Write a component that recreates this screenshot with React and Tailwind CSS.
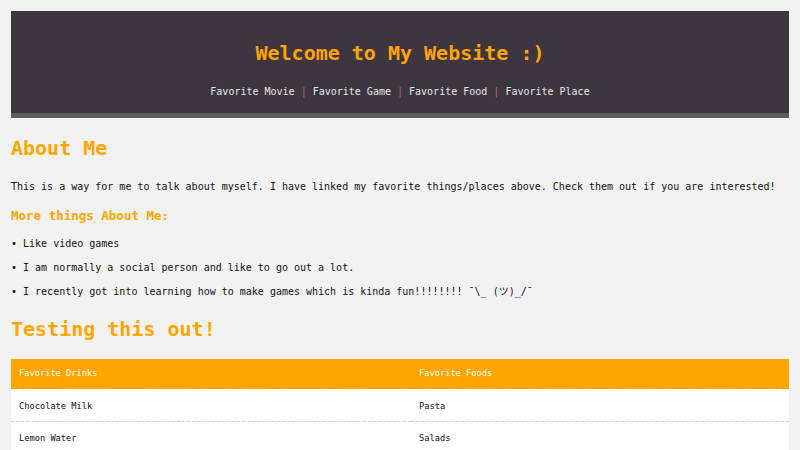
const mono = { fontFamily: '"DejaVu Sans Mono", "Noto Sans CJK JP", monospace' };

let App = () => {
    const links = ['Favorite Movie', 'Favorite Game', 'Favorite Food', 'Favorite Place'];
    const rows = [
        ['Chocolate Milk', 'Pasta'],
        ['Lemon Water', 'Salads'],
    ];

    return (
        <div className="bg-[#f2f2f2] min-h-screen p-[11px] text-[#111]" style={mono}>
            <header className="bg-[#3d3540] border-b-[5px] border-[#5f5d5b] pt-[30px] pb-[13px] text-center">
                <h1 className="text-[20px] leading-[24px] font-bold text-[#ffa500]">Welcome to My Website :)</h1>
                <nav className="mt-[19px] text-[10px] leading-[16px] text-[#e6e6e6]">
                    {links.map((l, i) => (
                        <span key={l}>
                            {i > 0 && <span className="text-[#b86a63]"> | </span>}
                            <a href="#">{l}</a>
                        </span>
                    ))}
                </nav>
            </header>

            <h2 className="mt-[18px] text-[20px] leading-[24px] font-bold text-[#ffa500]">About Me</h2>
            <p className="mt-[19px] text-[10px] leading-[16px]">
                This is a way for me to talk about myself. I have linked my favorite things/places above. Check them out if you are interested!
            </p>

            <h3 className="mt-[13px] text-[12.5px] leading-[16px] font-bold text-[#ffa500]">More things About Me:</h3>
            <ul className="mt-[12px] flex flex-col gap-[8px] text-[10px] leading-[16px]">
                <li>• Like video games</li>
                <li>• I am normally a social person and like to go out a lot.</li>
                <li>• I recently got into learning how to make games which is kinda fun!!!!!!!! ¯\_ (ツ)_/¯</li>
            </ul>

            <h2 className="mt-[17px] text-[20px] leading-[24px] font-bold text-[#ffa500]">Testing this out!</h2>

            <table className="mt-[18px] w-full border-collapse text-[8.7px]">
                <thead>
                    <tr className="bg-[#ffa500] text-white border-b border-dashed border-[#fff3d0]">
                        <th className="w-[400px] h-[30px] px-[8px] text-left font-normal">Favorite Drinks</th>
                        <th className="h-[30px] px-[8px] text-left font-normal">Favorite Foods</th>
                    </tr>
                </thead>
                <tbody>
                    {rows.map((r) => (
                        <tr key={r[0]} className="bg-white border-b border-dashed border-[#cfcfcf]">
                            <td className="h-[32px] px-[8px] pt-[3px] pb-0">{r[0]}</td>
                            <td className="h-[32px] px-[8px] pt-[3px] pb-0">{r[1]}</td>
                        </tr>
                    ))}
                </tbody>
            </table>
        </div>
    );
};

export default App
